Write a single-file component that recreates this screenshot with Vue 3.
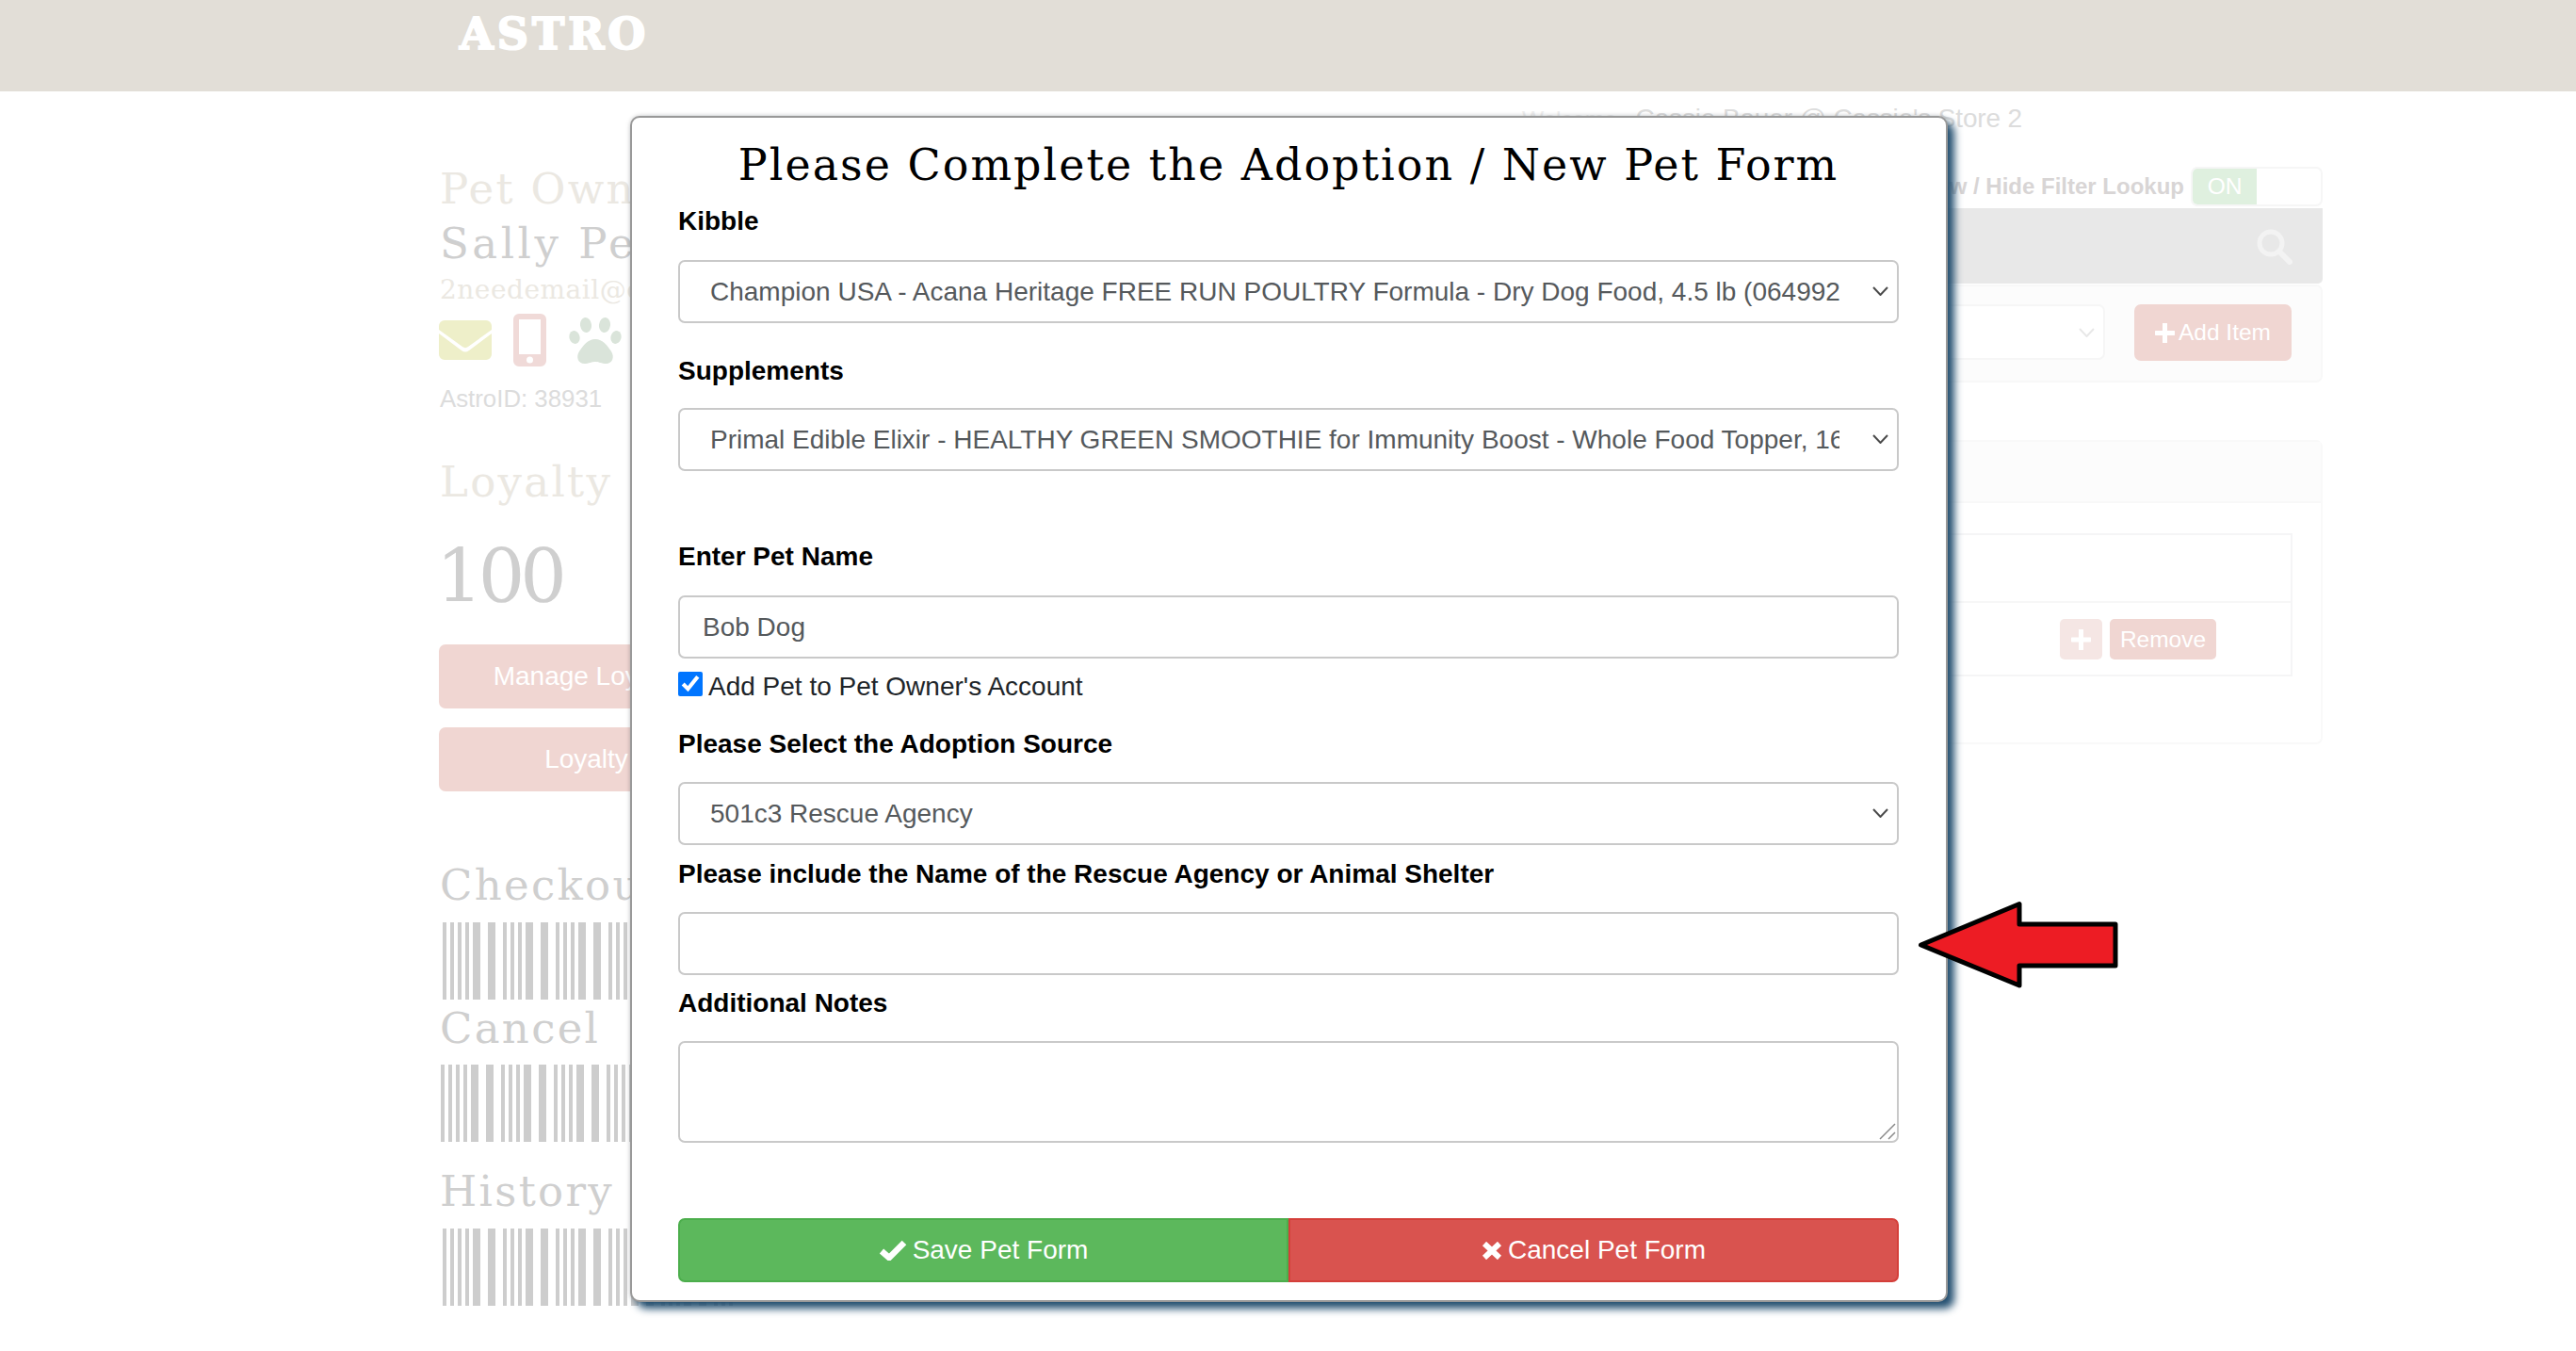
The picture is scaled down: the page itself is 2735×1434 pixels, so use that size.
<script setup>
const barcodeBars = [{ x: 0, w: 4 }]
for (let start = 8; start < 320; start += 56) {
  for (const [dx, w] of [[0, 4], [8, 4], [16, 4], [24, 8], [40, 8]]) {
    barcodeBars.push({ x: start + dx, w })
  }
}
const kibble = 'Champion USA - Acana Heritage FREE RUN POULTRY Formula - Dry Dog Food, 4.5 lb (064992000000)'
const supplement = 'Primal Edible Elixir - HEALTHY GREEN SMOOTHIE for Immunity Boost - Whole Food Topper, 16 oz'
</script>

<template>
  <div class="page">
    <header class="topbar">
      <span class="logo">ASTRO</span>
    </header>

    <main class="main">
      <aside class="left">
        <h2 class="slab sand">Pet Owner</h2>
        <h2 class="slab grey sally">Sally Peterson</h2>
        <div class="email">2needemail@example.com</div>
        <div class="contact-icons">
          <svg width="56" height="42" viewBox="0 0 56 42" class="ic-mail">
            <path d="M6 0H50a6 6 0 0 1 6 6V10L31 28a5 5 0 0 1-6 0L0 10V6a6 6 0 0 1 6-6Z" fill="#eeefc9" />
            <path d="M0 14L24 32a6.500 6.500 0 0 0 8 0L56 14V36a6 6 0 0 1-6 6H6a6 6 0 0 1-6-6Z" fill="#eeefc9" />
          </svg>
          <svg width="35" height="56" viewBox="0 0 35 56" class="ic-phone">
            <path fill-rule="evenodd" d="M6 0H29a6 6 0 0 1 6 6V50a6 6 0 0 1-6 6H6a6 6 0 0 1-6-6V6a6 6 0 0 1 6-6ZM6 6V43H29V6ZM17.500 45.500a3.500 3.500 0 1 0 0 7 3.500 3.500 0 0 0 0-7Z" fill="#f0dad8" />
          </svg>
          <svg width="56" height="50" viewBox="0 0 56 50" class="ic-paw">
            <g fill="#dae4da">
              <ellipse cx="6" cy="21" rx="5.500" ry="7" transform="rotate(-15 6 21)" />
              <ellipse cx="18" cy="8" rx="6" ry="8" transform="rotate(-8 18 8)" />
              <ellipse cx="38" cy="8" rx="6" ry="8" transform="rotate(8 38 8)" />
              <ellipse cx="50" cy="21" rx="5.500" ry="7" transform="rotate(15 50 21)" />
              <path d="M28 23C36 23 41 30 45 36C49 42 46 50 38 49C33 48 31 47 28 47C25 47 23 48 18 49C10 50 7 42 11 36C15 30 20 23 28 23Z" />
            </g>
          </svg>
        </div>
        <div class="astro-id">AstroID: 38931</div>
        <h2 class="slab sand loyalty">Loyalty</h2>
        <div class="points">100</div>
        <button class="soft-btn first">Manage Loyalty</button>
        <button class="soft-btn second">Loyalty</button>
        <h2 class="slab grey checkout">Checkout</h2>
        <svg class="barcode" width="313" height="82" viewBox="0 0 313 82">
          <rect v-for="b in barcodeBars" :key="b.x" :x="b.x + 3" y="0" :width="b.w" height="82" fill="#cdcdcd" />
        </svg>
        <h2 class="slab grey cancel">Cancel</h2>
        <svg class="barcode bar-cancel" width="313" height="82" viewBox="0 0 313 82">
          <rect v-for="b in barcodeBars" :key="b.x" :x="b.x + 1" y="0" :width="b.w" height="82" fill="#cdcdcd" />
        </svg>
        <h2 class="slab grey history">History</h2>
        <svg class="barcode bar-history" width="313" height="82" viewBox="0 0 313 82">
          <rect v-for="b in barcodeBars" :key="b.x" :x="b.x + 3" y="0" :width="b.w" height="82" fill="#cdcdcd" />
        </svg>
      </aside>

      <section class="right">
        <div class="welcome"><span class="welcome-word">Welcome</span>Cassie Bauer @ Cassie's Store 2</div>
        <div class="filter-row">
          <span class="filter-label">Show / Hide Filter Lookup</span>
          <div class="toggle"><span class="toggle-on">ON</span></div>
        </div>
        <div class="search-bar">
          <svg width="38" height="38" viewBox="0 0 38 38">
            <circle cx="15" cy="15" r="12" fill="none" stroke="#f3f3f3" stroke-width="5" />
            <path d="M24 24L35 35" stroke="#f3f3f3" stroke-width="6" stroke-linecap="round" />
          </svg>
        </div>
        <div class="add-panel">
          <div class="ghost-select">
            <svg width="17" height="10" viewBox="0 0 17 10"><path d="M1 1L8.500 9L16 1" fill="none" stroke="#e8e8e8" stroke-width="2" /></svg>
          </div>
          <button class="add-btn">
            <svg width="21" height="21" viewBox="0 0 21 21"><path d="M10.500 1V20M1 10.500H20" stroke="#fff" stroke-width="5" stroke-linecap="round" /></svg>
            Add Item
          </button>
        </div>
        <div class="list-panel">
          <div class="list-head"></div>
          <div class="list-table">
            <div class="row-one"></div>
            <div class="row-two">
              <span class="plus-btn">
                <svg width="21" height="22" viewBox="0 0 21 22"><path d="M10.500 1V21M1 11H20" stroke="#fff" stroke-width="5" stroke-linecap="round" /></svg>
              </span>
              <span class="remove-btn">Remove</span>
            </div>
          </div>
        </div>
      </section>
    </main>

    <div class="modal">
      <h1 class="modal-title">Please Complete the Adoption / New Pet Form</h1>

      <label class="lbl">Kibble</label>
      <div class="select-wrap gap-a">
        <select class="ctl sel"><option>{{ kibble }}</option></select>
        <svg class="chev" width="17" height="10" viewBox="0 0 17 10"><path d="M1 1L8.500 9L16 1" fill="none" stroke="#4a4a4a" stroke-width="2" /></svg>
      </div>

      <label class="lbl l-supp">Supplements</label>
      <div class="select-wrap gap-b">
        <select class="ctl sel"><option>{{ supplement }}</option></select>
        <svg class="chev" width="17" height="10" viewBox="0 0 17 10"><path d="M1 1L8.500 9L16 1" fill="none" stroke="#4a4a4a" stroke-width="2" /></svg>
      </div>

      <label class="lbl l-name">Enter Pet Name</label>
      <input class="ctl txt gap-a" type="text" value="Bob Dog" />

      <label class="check-row">
        <input type="checkbox" class="chk" checked />
        <span>Add Pet to Pet Owner's Account</span>
      </label>

      <label class="lbl l-source">Please Select the Adoption Source</label>
      <div class="select-wrap gap-c">
        <select class="ctl sel"><option>501c3 Rescue Agency</option></select>
        <svg class="chev" width="17" height="10" viewBox="0 0 17 10"><path d="M1 1L8.500 9L16 1" fill="none" stroke="#4a4a4a" stroke-width="2" /></svg>
      </div>

      <label class="lbl l-short">Please include the Name of the Rescue Agency or Animal Shelter</label>
      <input class="ctl txt gap-c" type="text" />

      <label class="lbl l-notes">Additional Notes</label>
      <div class="area-wrap gap-c">
        <textarea class="ctl area"></textarea>
        <svg class="grip" width="18" height="18" viewBox="0 0 18 18"><path d="M1 17L17 1M10 17L17 10" fill="none" stroke="#8a8a8a" stroke-width="1.500" /></svg>
      </div>

      <div class="actions">
        <button class="act save">
          <svg width="30" height="22" viewBox="0 0 30 22"><path d="M3 12L11 19L27 3" fill="none" stroke="#fff" stroke-width="6.500" /></svg>
          Save Pet Form
        </button>
        <button class="act cancel-act">
          <svg width="22" height="19" viewBox="0 0 22 19"><path d="M3 2L19 17M19 2L3 17" fill="none" stroke="#fff" stroke-width="6" /></svg>
          Cancel Pet Form
        </button>
      </div>
    </div>

    <svg class="arrow" width="220" height="100" viewBox="0 0 220 100">
      <path d="M5.500 50L110 6.500V28H212V72H110V93Z" fill="#ed1c24" stroke="#000" stroke-width="5" stroke-linejoin="round" />
    </svg>
  </div>
</template>

<style scoped>
.page {
  position: relative;
  width: 2735px;
  height: 1434px;
  overflow: hidden;
  background: #fff;
  font-family: "Liberation Sans", Arial, sans-serif;
  font-size: 28px;
}
.topbar {
  height: 97px;
  background: #e2ded7;
  padding-left: 488px;
  box-sizing: border-box;
}
.logo {
  display: block;
  width: 200px;
  padding-top: 9px;
  font-family: "DejaVu Serif", serif;
  font-weight: 900;
  font-size: 46px;
  line-height: 54px;
  letter-spacing: 4px;
  -webkit-text-stroke: 2px #fff;
  color: #fff;
  white-space: nowrap;
}
.main {
  display: flex;
  gap: 20px;
  padding: 11px 0 0 467px;
}
.left {
  width: 313px;
  flex: none;
  padding-top: 68px;
  white-space: nowrap;
}
.slab {
  margin: 0;
  font-family: "DejaVu Serif", serif;
  font-weight: 400;
  font-size: 45px;
  line-height: 50px;
  height: 50px;
  letter-spacing: 2.300px;
}
.sand { color: #ebe8e2; }
.grey { color: #cfcfcf; }
.sally { margin-top: 8px; letter-spacing: 3.500px; }
.email {
  margin-top: 6px;
  font-family: "DejaVu Serif", serif;
  font-size: 28px;
  line-height: 36px;
  letter-spacing: 0.500px;
  color: #ebe8e2;
}
.contact-icons {
  position: relative;
  display: flex;
  align-items: flex-start;
  height: 56px;
  margin-top: 7px;
}
.ic-mail { margin-top: 7px; margin-left: -1px; }
.ic-phone { margin-left: 23px; }
.ic-paw { margin-left: 24px; margin-top: 4px; }
.astro-id {
  margin-top: 16px;
  line-height: 36px;
  font-size: 25.800px;
  color: #dcdcdc;
}
.loyalty { margin-top: 46px; }
.points {
  margin-top: 30px;
  margin-left: -4px;
  margin-bottom: -2px;
  height: 90px;
  font-family: "DejaVu Serif", serif;
  font-size: 78px;
  line-height: 90px;
  letter-spacing: -5px;
  color: #cfcfcf;
}
.soft-btn {
  display: block;
  width: 313px;
  height: 68px;
  margin-left: -1px;
  border: 0;
  border-radius: 7px;
  background: #f0d6d2;
  color: #fff;
  font: 28px "Liberation Sans", Arial, sans-serif;
}
.first { margin-top: 29px; }
.second { margin-top: 20px; }
.checkout { margin-top: 75px; }
.barcode { display: block; margin-top: 14px; }
.cancel { margin-top: 6px; }
.bar-cancel { margin-top: 13px; }
.history { margin-top: 28px; }
.bar-history { margin-top: 14px; }

.right {
  width: 1666px;
  flex: none;
}
.welcome {
  line-height: 36px;
  height: 36px;
  padding-right: 319px;
  text-align: right;
  letter-spacing: -0.150px;
  color: #dcdcdc;
}
.welcome-word {
  margin-right: 20px;
  font-size: 24.500px;
  color: #eeeeee;
}
.filter-row {
  display: flex;
  justify-content: flex-end;
  align-items: center;
  gap: 7px;
  height: 42px;
  margin-top: 33px;
}
.filter-label {
  font-size: 24px;
  font-weight: 700;
  color: #d8d5d5;
}
.toggle {
  box-sizing: border-box;
  width: 140px;
  height: 42px;
  border: 2px solid #f6f6f6;
  border-radius: 7px;
  overflow: hidden;
}
.toggle-on {
  display: block;
  width: 68px;
  height: 100%;
  background: #dff0df;
  color: #fff;
  font-size: 24.500px;
  line-height: 38px;
  text-align: center;
}
.search-bar {
  display: flex;
  justify-content: flex-end;
  height: 80px;
  margin-top: 2px;
  padding: 22px 32px 0 0;
  box-sizing: border-box;
  background: #e8e8e8;
  border-radius: 0 0 5px 0;
}
.add-panel {
  display: flex;
  justify-content: flex-end;
  gap: 31px;
  height: 104px;
  margin-top: 1px;
  padding: 19px 31px 0 0;
  box-sizing: border-box;
  background: #fcfcfc;
  border: 2px solid #f8f8f8;
  border-radius: 7px;
}
.ghost-select {
  box-sizing: border-box;
  display: flex;
  justify-content: flex-end;
  align-items: center;
  width: 600px;
  height: 59px;
  padding-right: 9px;
  background: #fff;
  border: 2px solid #f6f6f6;
  border-radius: 7px;
}
.add-btn {
  display: flex;
  justify-content: center;
  align-items: center;
  gap: 4px;
  width: 167px;
  height: 60px;
  padding: 0;
  border: 0;
  border-radius: 7px;
  background: #f0d6d2;
  color: #fff;
  font: 24.500px "Liberation Sans", Arial, sans-serif;
}
.list-panel {
  box-sizing: border-box;
  height: 323px;
  margin-top: 61px;
  padding-bottom: 0;
  border: 2px solid #f9f9f9;
  border-radius: 7px;
}
.list-head {
  height: 63px;
  background: #fcfcfc;
  border-bottom: 2px solid #f8f8f8;
}
.list-table {
  box-sizing: border-box;
  height: 152px;
  margin: 32px 30px 0 0;
  border: 2px solid #f5f5f6;
}
.row-one {
  height: 70px;
  border-bottom: 2px solid #f7f7f7;
}
.row-two {
  display: flex;
  justify-content: flex-end;
  gap: 8px;
  padding: 17px 79px 0 0;
}
.plus-btn {
  display: flex;
  justify-content: center;
  align-items: center;
  width: 45px;
  height: 43px;
  border-radius: 5px;
  background: #f5e6e4;
}
.remove-btn {
  width: 113px;
  height: 43px;
  border-radius: 5px;
  background: #f0d6d2;
  color: #fff;
  font-size: 24.500px;
  line-height: 43px;
  text-align: center;
}

.modal {
  position: absolute;
  left: 669px;
  top: 123px;
  box-sizing: border-box;
  width: 1399px;
  height: 1259px;
  padding: 0 50px 0 49px;
  background: #fff;
  border: 2px solid #999;
  border-radius: 10px;
  box-shadow: 7px 7px 9px #234f70, 0 0 5px rgba(0, 0, 0, 0.2);
}
.modal-title {
  margin: 0;
  padding-top: 9px;
  height: 88px;
  box-sizing: border-box;
  font-family: "DejaVu Serif", serif;
  font-weight: 400;
  font-size: 46px;
  line-height: 82px;
  letter-spacing: 2px;
  text-align: center;
  color: #000;
  white-space: nowrap;
  overflow: hidden;
}
.lbl {
  display: block;
  height: 42px;
  line-height: 44px;
  font-weight: 700;
  color: #000;
}
.l-supp { margin-top: 29px; }
.l-name { margin-top: 69px; }
.l-source { margin-top: 18px; }
.l-short { margin-top: 9px; }
.l-notes { margin-top: 8px; }
.gap-a { margin-top: 21px; }
.gap-b { margin-top: 19px; }
.gap-c { margin-top: 20px; }
.select-wrap { position: relative; height: 67px; }
.ctl {
  display: block;
  box-sizing: border-box;
  width: 100%;
  height: 67px;
  margin-bottom: 0;
  background: #fff;
  border: 2px solid #c9c9c9;
  border-radius: 7px;
  color: #55595c;
  font: 28px "Liberation Sans", Arial, sans-serif;
  outline: none;
}
.sel {
  appearance: none;
  padding: 0 61px 0 32px;
}
.chev {
  position: absolute;
  right: 11px;
  top: 28px;
}
.txt { padding: 0 24px; }
.area-wrap { position: relative; height: 108px; }
.area { height: 108px; padding: 10px 24px; resize: none; }
.grip {
  position: absolute;
  right: 3px;
  bottom: 3px;
}
.check-row {
  display: flex;
  align-items: center;
  gap: 6px;
  height: 42px;
  margin-top: 9px;
  color: #212529;
}
.chk {
  width: 26px;
  height: 26px;
  margin: 0;
  flex: none;
  position: relative;
  top: -3px;
}
.actions {
  display: flex;
  height: 68px;
  margin-top: 80px;
}
.act {
  flex: 1;
  display: flex;
  justify-content: center;
  align-items: center;
  gap: 6px;
  padding: 0;
  color: #fff;
  font: 28px "Liberation Sans", Arial, sans-serif;
}
.save {
  background: #5cb85c;
  border: 2px solid #4cae4c;
  border-radius: 7px 0 0 7px;
}
.cancel-act {
  background: #d9534f;
  border: 2px solid #d43f3a;
  border-radius: 0 7px 7px 0;
}
.arrow {
  position: absolute;
  left: 2034px;
  top: 953px;
}
</style>

<style>
html, body { margin: 0; overflow: hidden; }
</style>
